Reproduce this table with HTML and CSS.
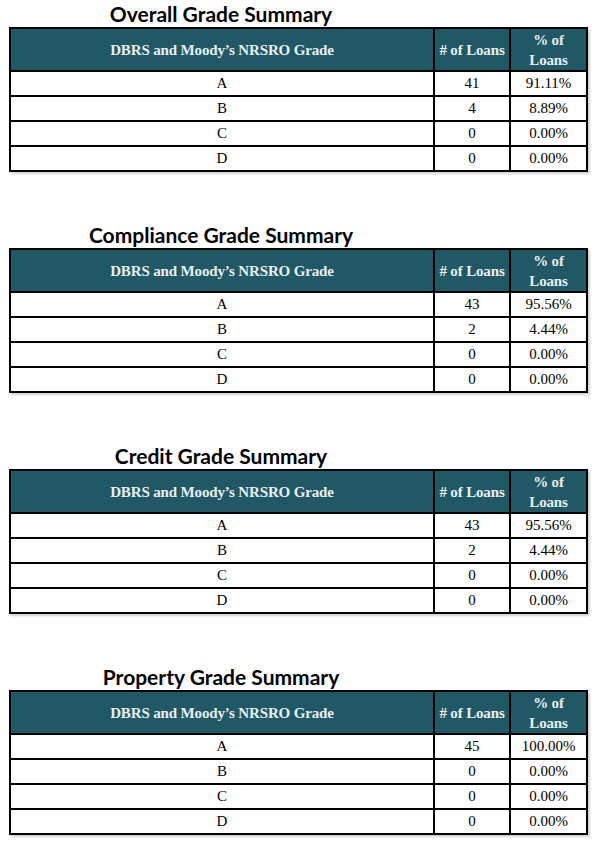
FILE: index.html
```html
<!DOCTYPE html>
<html lang="en">
<head>
<meta charset="utf-8">
<title>Grade Summary</title>
<link rel="stylesheet" href="styles.css">
</head>
<body>
<main class="page">
  <section class="summary">
    <h2 class="title">Overall Grade Summary</h2>
    <table class="grid">
      <colgroup><col class="c-grade"><col class="c-num"><col class="c-pct"></colgroup>
      <thead><tr><th>DBRS and Moody’s NRSRO Grade</th><th># of Loans</th><th class="wrap">% of Loans</th></tr></thead>
      <tbody>
        <tr><td>A</td><td>41</td><td>91.11%</td></tr>
        <tr><td>B</td><td>4</td><td>8.89%</td></tr>
        <tr><td>C</td><td>0</td><td>0.00%</td></tr>
        <tr><td>D</td><td>0</td><td>0.00%</td></tr>
      </tbody>
    </table>
  </section>
  <section class="summary">
    <h2 class="title">Compliance Grade Summary</h2>
    <table class="grid">
      <colgroup><col class="c-grade"><col class="c-num"><col class="c-pct"></colgroup>
      <thead><tr><th>DBRS and Moody’s NRSRO Grade</th><th># of Loans</th><th class="wrap">% of Loans</th></tr></thead>
      <tbody>
        <tr><td>A</td><td>43</td><td>95.56%</td></tr>
        <tr><td>B</td><td>2</td><td>4.44%</td></tr>
        <tr><td>C</td><td>0</td><td>0.00%</td></tr>
        <tr><td>D</td><td>0</td><td>0.00%</td></tr>
      </tbody>
    </table>
  </section>
  <section class="summary">
    <h2 class="title">Credit Grade Summary</h2>
    <table class="grid">
      <colgroup><col class="c-grade"><col class="c-num"><col class="c-pct"></colgroup>
      <thead><tr><th>DBRS and Moody’s NRSRO Grade</th><th># of Loans</th><th class="wrap">% of Loans</th></tr></thead>
      <tbody>
        <tr><td>A</td><td>43</td><td>95.56%</td></tr>
        <tr><td>B</td><td>2</td><td>4.44%</td></tr>
        <tr><td>C</td><td>0</td><td>0.00%</td></tr>
        <tr><td>D</td><td>0</td><td>0.00%</td></tr>
      </tbody>
    </table>
  </section>
  <section class="summary">
    <h2 class="title">Property Grade Summary</h2>
    <table class="grid">
      <colgroup><col class="c-grade"><col class="c-num"><col class="c-pct"></colgroup>
      <thead><tr><th>DBRS and Moody’s NRSRO Grade</th><th># of Loans</th><th class="wrap">% of Loans</th></tr></thead>
      <tbody>
        <tr><td>A</td><td>45</td><td>100.00%</td></tr>
        <tr><td>B</td><td>0</td><td>0.00%</td></tr>
        <tr><td>C</td><td>0</td><td>0.00%</td></tr>
        <tr><td>D</td><td>0</td><td>0.00%</td></tr>
      </tbody>
    </table>
  </section>
</main>
</body>
</html>
```
FILE: styles.css
```css
html, body {
  margin: 0;
  padding: 0;
  background: #ffffff;
}

.page {
  padding: 3px 0 0 9px;
  width: 577px;
}

.summary {
  margin-bottom: 52px;
}

.title {
  margin: 0;
  width: 424px;
  height: 24px;
  line-height: 21px;
  text-align: center;
  font-family: Lato, "Open Sans", sans-serif;
  font-weight: 700;
  font-size: 21px;
  color: #000;
}

.grid {
  width: 577px;
  table-layout: fixed;
  border-collapse: collapse;
  border: 2px solid #000;
  box-shadow: 2px 2px 2px rgba(0, 0, 0, 0.18);
  font-family: "Liberation Serif", "Times New Roman", serif;
  font-size: 15px;
  color: #000;
}

.c-grade { width: 424px; }
.c-num { width: 76px; }
.c-pct { width: 77px; }

.grid th,
.grid td {
  border: 2px solid #000;
  padding: 0;
  text-align: center;
  vertical-align: middle;
  overflow: hidden;
}

.grid th {
  height: 41px;
  background: #215866;
  color: #e9eff1;
  font-weight: 700;
  line-height: 20px;
  white-space: nowrap;
  letter-spacing: -0.15px;
}

.grid th.wrap {
  white-space: normal;
  padding: 0 14px;
}

.grid td {
  height: 23px;
  line-height: 17px;
}
```
